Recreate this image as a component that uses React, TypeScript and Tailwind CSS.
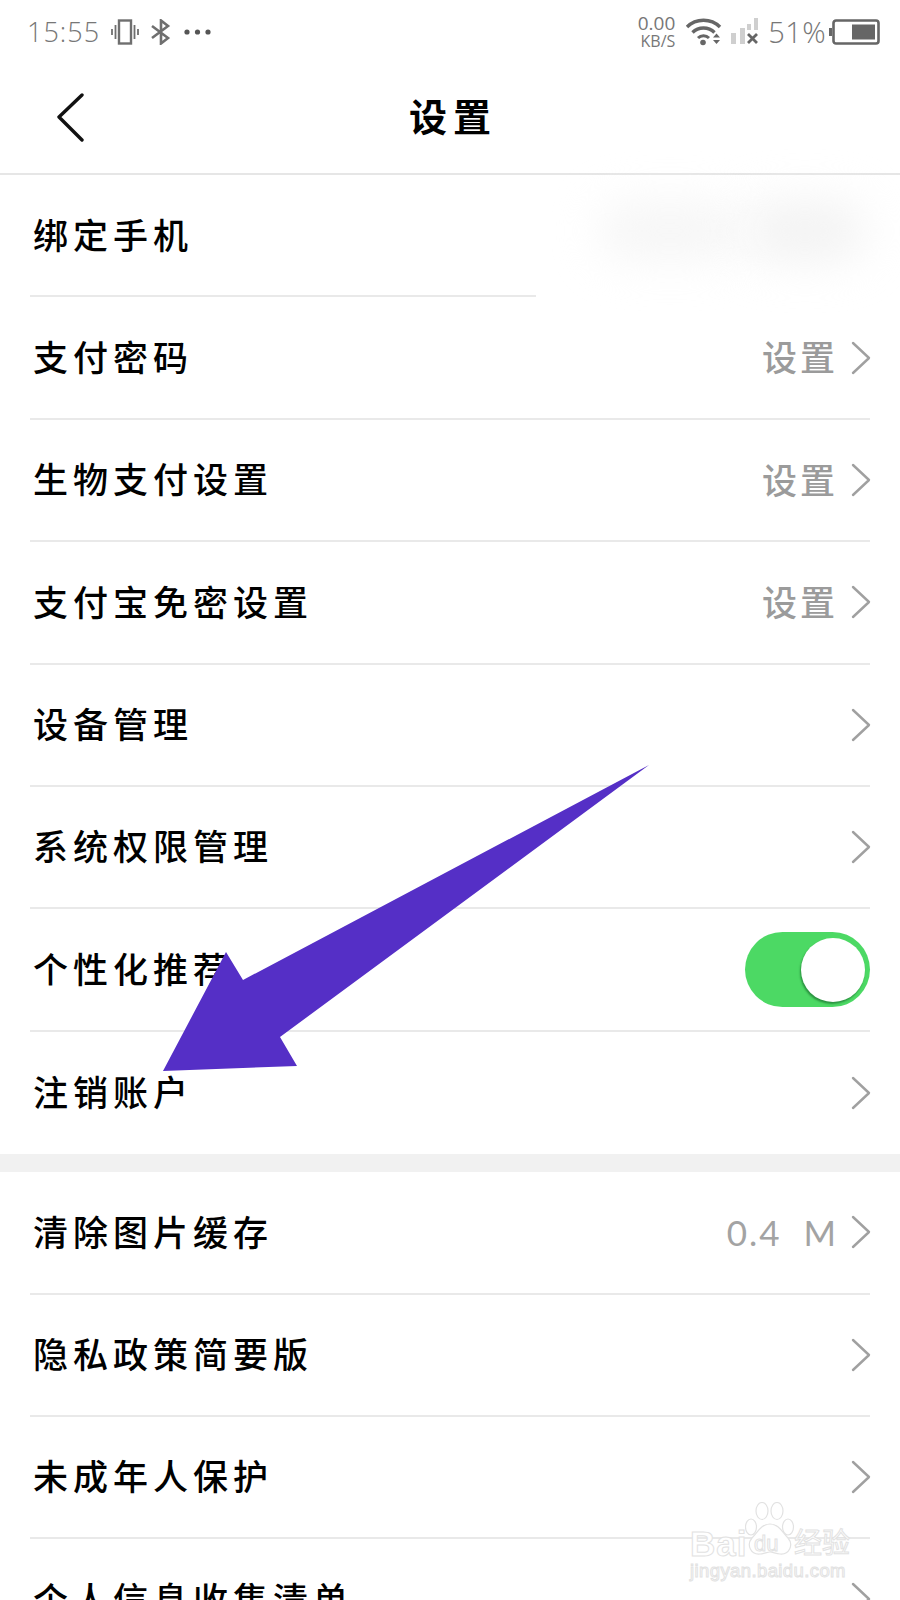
const font = "font-['Noto_Sans_CJK_SC','Noto_Sans',sans-serif]";

interface RowProps {
  label: string;
  value?: string;
  noChevron?: boolean;
  children?: React.ReactNode;
}

function Chevron() {
  return (
    <svg width="20" height="34" viewBox="0 0 20 34" fill="none" stroke="#a0a0a0" strokeWidth="2.4" strokeLinecap="round" strokeLinejoin="round" className="ml-[13px] -mr-px shrink-0">
      <path d="M2 2l16 15L2 32" />
    </svg>
  );
}

function Row({ label, value, noChevron, children }: RowProps) {
  return (
    <div className="h-[122.4px] mx-[30px] flex items-center justify-between border-b-2 border-[#e9e9e9]">
      <span className="text-[35px] font-medium tracking-[5px] pl-[3px] pb-[3px] text-black whitespace-nowrap">{label}</span>
      <div className="flex items-center">
        {value && <span className="text-[35px] font-medium tracking-[3px] pb-[2px] text-[#9b9b9b]">{value}</span>}
        {children}
        {!noChevron && <Chevron />}
      </div>
    </div>
  );
}

function StatusBar() {
  return (
    <div className="h-[63px] flex items-center justify-between pl-[27px] pr-[20px] text-[#777]">
      <div className="flex items-center">
        <span className="font-['Open_Sans'] font-light text-[27px] tracking-[1px] leading-none">15:55</span>
        <svg width="28" height="26" viewBox="0 0 28 26" fill="none" stroke="#6f6f6f" className="ml-[11px]">
          <rect x="8" y="1.5" width="12" height="23" strokeWidth="2.4" />
          <path d="M4.5 6v14M1 10v6M23.5 6v14M27 10v6" strokeWidth="1.8" />
        </svg>
        <svg width="22" height="26" viewBox="0 0 22 26" fill="none" stroke="#6f6f6f" strokeWidth="2.6" className="ml-[11px]">
          <path d="M2 7l16 12-7 5.5V1.5L18 7 2 19" />
        </svg>
        <svg width="27" height="6" viewBox="0 0 27 6" fill="#555" className="ml-[12px]">
          <circle cx="3" cy="3" r="2.6" />
          <circle cx="13.5" cy="3" r="2.6" />
          <circle cx="24" cy="3" r="2.6" />
        </svg>
      </div>
      <div className="flex items-center">
        <div className="flex flex-col items-end font-['Open_Sans'] leading-none">
          <span className="text-[19px] leading-[19px]">0.00</span>
          <span className="text-[16px] leading-[17px]">KB/S</span>
        </div>
        <svg width="37" height="28" viewBox="0 0 37 28" fill="none" stroke="#666" strokeWidth="3.4" className="ml-[10px]">
          <path d="M2 9c9-9 24-9 33 0" />
          <path d="M7.5 14.5c6-6 16-6 22 0" />
          <path d="M13 20c3-3 8-3 11 0" strokeWidth="3" />
          <circle cx="18" cy="24.5" r="2.8" fill="#666" stroke="none" />
          <path d="M28 19.5l3.5-4 3.5 4zM28 22l3.5 4 3.5-4z" fill="#666" stroke="none" />
        </svg>
        <svg width="28" height="27" viewBox="0 0 28 27" className="ml-[9px]">
          <rect x="0" y="15" width="5" height="11" fill="#cfcfcf" />
          <rect x="9" y="10" width="5" height="16" fill="#cfcfcf" />
          <rect x="16" y="6" width="4" height="6" fill="#cfcfcf" />
          <rect x="23" y="0" width="4" height="12" fill="#cfcfcf" />
          <path d="M17 16l9 9M26 16l-9 9" stroke="#666" strokeWidth="2.8" />
        </svg>
        <span className="font-['Open_Sans'] font-light text-[29px] tracking-[0.4px] leading-none ml-[9px]">51%</span>
        <svg width="51" height="26" viewBox="0 0 51 26" fill="none" className="ml-[3px]">
          <rect x="0" y="9" width="3" height="8" fill="#666" />
          <rect x="4.5" y="1.5" width="45" height="23" rx="2.5" stroke="#666" strokeWidth="2.6" />
          <rect x="23" y="5.5" width="23" height="15" fill="#666" />
        </svg>
      </div>
    </div>
  );
}

function Watermark() {
  return (
    <div className="absolute left-[688px] top-[1500px] w-[165px] text-white font-['Liberation_Sans',sans-serif] [-webkit-text-stroke:1px_#e2e2e2]">
      <svg width="50" height="56" viewBox="0 0 50 56" fill="#fff" stroke="#e2e2e2" strokeWidth="1.2" className="absolute left-[57px] top-[2px]">
        <ellipse cx="6" cy="25" rx="5.5" ry="8" />
        <ellipse cx="17" cy="9" rx="6" ry="8.5" />
        <ellipse cx="32" cy="9" rx="6" ry="8.5" />
        <ellipse cx="43" cy="25" rx="5.5" ry="8" />
        <path d="M25 22c9 0 12 8 18 14 6 7 1 17-8 16-4 0-7-2-10-2s-6 2-10 2c-9 1-14-9-8-16 6-6 9-14 18-14z" />
      </svg>
      <div className="absolute left-[2px] top-[26px] text-[35px] leading-none font-bold tracking-[1px] whitespace-nowrap">Bai</div>
      <div className="absolute left-[66px] top-[33px] text-[22px] leading-none whitespace-nowrap">du</div>
      <div className="absolute left-[106px] top-[27px] text-[28px] leading-none font-['Noto_Sans_CJK_SC'] whitespace-nowrap">经验</div>
      <div className="absolute left-[2px] top-[62px] text-[18.5px] leading-none tracking-[0.4px] whitespace-nowrap">jingyan.baidu.com</div>
    </div>
  );
}

export default function App() {
  return (
    <div className={`relative w-[900px] h-[1600px] overflow-hidden bg-white ${font}`}>
      <StatusBar />
      <div className="relative h-[112px] flex items-center justify-center border-b-2 border-[#e6e6e6]">
        <svg width="30" height="50" viewBox="0 0 30 50" fill="none" stroke="#111" strokeWidth="3.4" strokeLinecap="round" strokeLinejoin="round" className="absolute left-[56px] top-[30px]">
          <path d="M26 2L3 24l23 23" />
        </svg>
        <span className="text-[38px] font-bold tracking-[6px] text-black pl-[6px] -mt-[7px]">设置</span>
      </div>

      <div className="relative h-[122.4px] flex items-center">
        <span className="ml-[33px] pb-[3px] text-[35px] font-medium tracking-[5px] text-black">绑定手机</span>
        <div className="absolute left-[30px] bottom-0 w-[506px] h-0.5 bg-[#e9e9e9]" />
        <div className="absolute left-[600px] top-[28px] w-[140px] h-[56px] rounded-full bg-[#f6f6f6] blur-[22px]" />
        <div className="absolute left-[745px] top-[26px] w-[120px] h-[60px] rounded-full bg-[#f3f3f3] blur-[22px]" />
      </div>
      <Row label="支付密码" value="设置" />
      <Row label="生物支付设置" value="设置" />
      <Row label="支付宝免密设置" value="设置" />
      <Row label="设备管理" />
      <Row label="系统权限管理" />
      <Row label="个性化推荐" noChevron>
        <div className="w-[125px] h-[75px] rounded-full bg-[#4cd964] flex items-center justify-end pr-[5px]">
          <div className="w-[64px] h-[64px] rounded-full bg-white shadow-[-1px_2px_2px_rgba(0,60,20,0.45)]" />
        </div>
      </Row>
      <div className="h-[122.4px] mx-[30px] flex items-center justify-between">
        <span className="text-[35px] font-medium tracking-[5px] pl-[3px] pb-[3px] text-black">注销账户</span>
        <Chevron />
      </div>

      <div className="h-[18px] bg-[#f1f1f1]" />

      <Row label="清除图片缓存">
        <span className="font-['Lato'] text-[35px] tracking-[2px] whitespace-pre text-[#a3a3a3]">0.4  M</span>
      </Row>
      <Row label="隐私政策简要版" />
      <Row label="未成年人保护" />
      <Row label="个人信息收集清单" />

      <svg width="900" height="1600" viewBox="0 0 900 1600" className="absolute inset-0 pointer-events-none">
        <polygon points="649,765 243,980 226,952 163,1071 297,1066 280,1037" fill="#552fc6" />
      </svg>
      <Watermark />
    </div>
  );
}
